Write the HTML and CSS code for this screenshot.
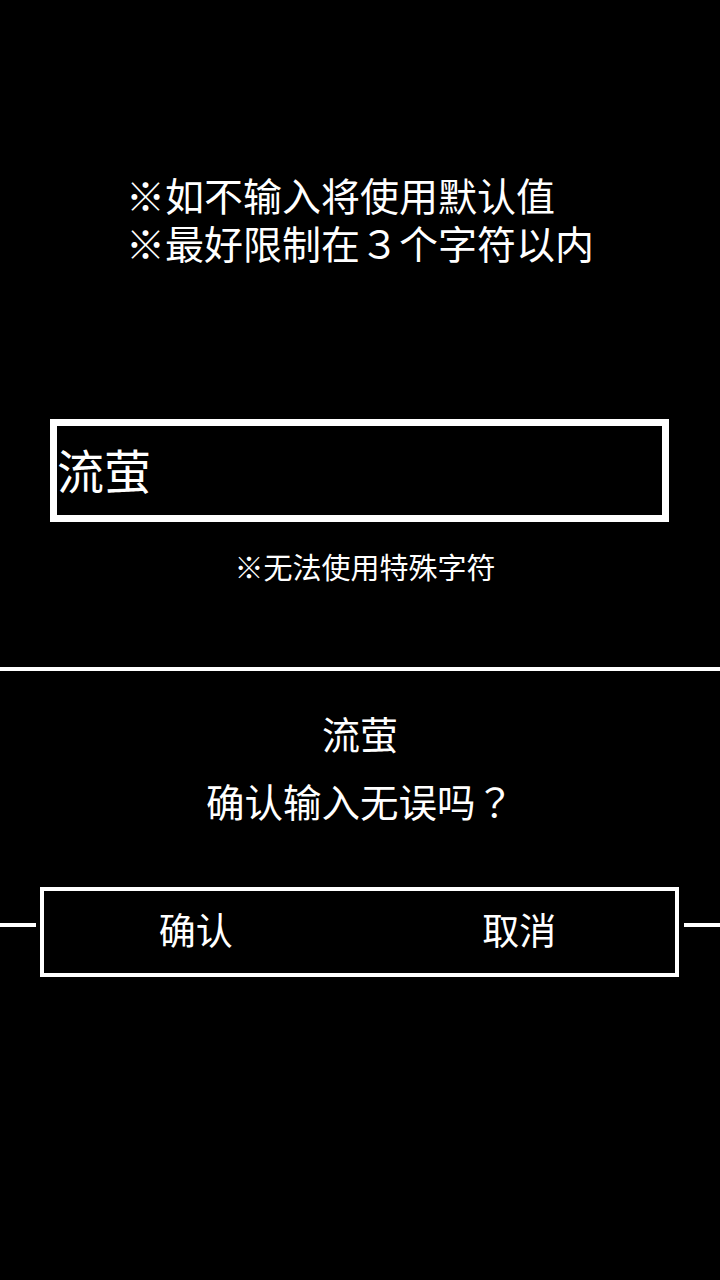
FILE: index.html
```html
<!DOCTYPE html>
<html lang="zh-CN">
<head>
<meta charset="utf-8">
<title>输入名字</title>
<link rel="stylesheet" href="styles.css">
</head>
<body>
<main class="screen">
  <section class="notes">
    <p class="note">※如不输入将使用默认值</p>
    <p class="note">※最好限制在３个字符以内</p>
  </section>
  <div class="field"><span class="field-text">流萤</span></div>
  <p class="warn">※无法使用特殊字符</p>
  <div class="divider"></div>
  <section class="confirm">
    <p class="name">流萤</p>
    <p class="question">确认输入无误吗<span class="qmark" lang="ja">？</span></p>
    <div class="choices-row">
      <span class="stub stub-left"></span>
      <div class="choices">
        <button class="choice choice-ok">确认</button>
        <button class="choice choice-cancel">取消</button>
      </div>
      <span class="stub stub-right"></span>
    </div>
  </section>
</main>
</body>
</html>
```

FILE: styles.css
```css
html, body {
  margin: 0;
  padding: 0;
  background: #000;
}
body {
  width: 720px;
  height: 1280px;
  overflow: hidden;
  color: #fff;
  font-family: "Noto Sans CJK SC", "Noto Sans", sans-serif;
}
.screen {
  display: flex;
  flex-direction: column;
}
.notes {
  margin-top: 170px;
  align-self: center;
  width: 468px;
}
.note {
  margin: 0;
  font-size: 39px;
  line-height: 48px;
  white-space: nowrap;
}
.field {
  margin: 153px 0 0 50px;
  width: 619px;
  height: 103px;
  box-sizing: border-box;
  border: 7px solid #fff;
  display: flex;
  align-items: center;
}
.field-text {
  font-size: 47px;
  line-height: 56px;
  margin-top: -4px;
}
.warn {
  margin: 26px 0 0;
  padding-left: 10px;
  text-align: center;
  font-size: 29px;
  line-height: 36px;
}
.divider {
  margin-top: 83px;
  height: 4px;
  background: #fff;
}
.confirm {
  display: flex;
  flex-direction: column;
}
.name {
  margin: 38px 0 0;
  text-align: center;
  font-size: 38px;
  line-height: 48px;
}
.question {
  margin: 19px 0 0;
  text-align: center;
  font-size: 38.5px;
  line-height: 48px;
}
.qmark {
  font-family: "Noto Sans CJK JP", "Noto Sans CJK SC", sans-serif;
}
.choices-row {
  margin-top: 63px;
  display: flex;
  align-items: flex-start;
}
.stub {
  width: 36px;
  height: 4px;
  margin-top: 36px;
  background: #fff;
  flex: none;
}
.stub-left { margin-right: 4px; }
.stub-right { margin-left: 5px; }
.choices {
  flex: 1;
  height: 90px;
  box-sizing: border-box;
  border: 4px solid #fff;
  display: flex;
  align-items: center;
}
.choice {
  flex: 1;
  background: none;
  border: 0;
  padding: 0 0 6px;
  color: #fff;
  font-family: inherit;
  font-size: 37px;
  line-height: 48px;
}
.choice-ok { padding-right: 20px; }
.choice-cancel { padding-right: 4px; }
```
